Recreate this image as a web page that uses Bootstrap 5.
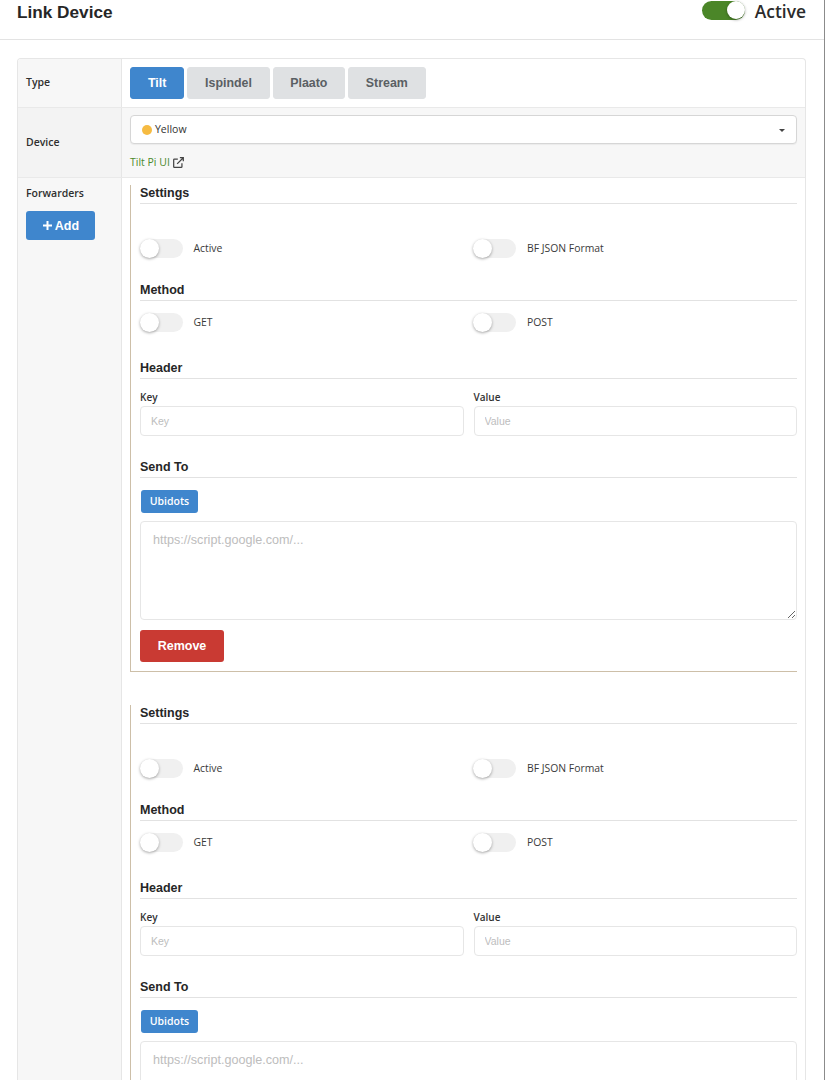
<!DOCTYPE html>
<html lang="en">
<head>
<meta charset="utf-8">
<title>Link Device</title>
<link href="https://cdn.jsdelivr.net/npm/bootstrap@5.3.0/dist/css/bootstrap.min.css" rel="stylesheet">
<style>
html,body{height:1080px;overflow:hidden}
body{font-family:"Open Sans","Liberation Sans",sans-serif;font-size:10.5px;color:#333;background:#fff;border-right:1px solid #8b8b8b}
.topbar{height:40px;padding:0 18px 0 17px;border-bottom:1px solid #e3e3e3}
.page-title{font-family:"Liberation Sans",sans-serif;font-weight:700;font-size:17.2px;color:#262626;margin:0 0 15px;line-height:24px}
.top-state{font-size:17.4px;font-weight:600;color:#2b2b2b;line-height:22px;margin-left:10px}
.switcher{display:block;width:43px;height:19px;border-radius:10px;background:#f0f0f0;position:relative;flex:none}
.switcher::after{content:"";position:absolute;left:0;top:0;width:19px;height:19px;border-radius:50%;background:#fff;box-shadow:0 1px 3px rgba(0,0,0,.35)}
.switcher.on{background:#4b8628}
.switcher.on::after{left:25px;width:18px;height:18px}
.top-wrap{margin-bottom:18px}
.panel{margin:18px 18px 0 17px;border:1px solid #e6e6e6;border-radius:4px 4px 0 0;border-bottom:0;overflow:hidden}
.line{display:flex}
.line+.line{border-top:1px solid #e9e9e9}
.side{width:104px;flex:none;background:#f7f7f7;border-right:1px solid #e6e6e6;padding:0 8px;font-weight:600;color:#2f2f2f;font-size:10.5px}
.main{flex:1;min-width:0;padding:0 8px}
.h49{height:48px}
.h70{height:69px}
.shade{background:#f7f7f7}
.side.darker{background:#f3f3f3}
.tabs{gap:3px}
.tab{font-family:"Liberation Sans",sans-serif;font-weight:700;font-size:12.4px;height:32px;border-radius:3px;border:1px solid #dfe1e3;background:#dfe1e3;color:#5a5f63;padding:0 16.7px;display:flex;align-items:center;justify-content:center}
.tab.act{background:#3f86cd;border-color:#3f86cd;color:#fff;padding:0 17px}
.picker{height:29px;background:#fff;border:1px solid #d6d6d6;border-radius:4px;padding:1px 11px 0;color:#333;font-size:10.5px;margin-top:7px;box-shadow:0 1px 1px rgba(0,0,0,.05)}
.dot{width:10px;height:10px;border-radius:50%;background:#f6bb42;display:inline-block;margin-right:3px}
.caret-mark{width:0;height:0;border-left:3px solid transparent;border-right:3px solid transparent;border-top:3px solid #444}
.extlink{color:#4b8a2b;font-size:10.5px;text-decoration:none;line-height:14px;margin-top:11px;display:flex;align-items:center;gap:3px}
.add-btn{background:#3f86cd;border:0;color:#fff;font-family:"Liberation Sans",sans-serif;font-weight:700;font-size:12.5px;width:69px;height:29px;border-radius:3px;margin-top:11px;display:flex;align-items:center;justify-content:center;gap:2px;padding:0}
.fwd-label{padding-top:8px;line-height:14px}
.fwd{border-left:1px solid #cdbfa8;padding-left:9px}
.fwd.first{border-bottom:1px solid #cdbfa8;margin-top:7px;padding-bottom:9px;margin-bottom:33px}
.sect{font-family:"Liberation Sans",sans-serif;font-weight:700;font-size:12.5px;color:#262626;line-height:16px;padding-bottom:2px;border-bottom:1px solid #e2e2e2;margin:0}
.pairs{display:grid;grid-template-columns:1fr 1fr;column-gap:10px}
.toggle-row{display:flex;align-items:center;gap:11px;height:19px}
.toggle-row .switcher{margin-left:-.5px}
.toggle-row span.txt{color:#3a3a3a;font-size:10.4px}
.fld-label{font-weight:600;font-size:10px;color:#333;line-height:12px;margin-bottom:3px}
.field{display:block;width:100%;height:30px;border:1px solid #e6e6e6;border-radius:4px;font-family:"Liberation Sans",sans-serif;font-size:10.5px;padding:0 10px;outline:0;background:#fff}
.field::placeholder,.big-field::placeholder{color:#bdbdbd;opacity:1}
.big-field{display:block;width:100%;height:99px;border:1px solid #e6e6e6;border-radius:4px;font-family:"Liberation Sans",sans-serif;font-size:12.6px;padding:9px 12px;outline:0;background:#fff;resize:vertical}
.mini-btn{display:block;background:#3f86cd;border:0;border-radius:3px;color:#fff;font-weight:600;font-size:10.5px;width:57px;height:23px;padding:0;margin-left:1px}
.rm-btn{display:block;background:#c93a33;border:0;border-radius:3px;color:#fff;font-family:"Liberation Sans",sans-serif;font-weight:700;font-size:12.5px;width:84px;height:32px;padding:1px 0 0;margin-top:10px}
.gap-a{margin-top:35px}.gap-b{margin-top:24px}.gap-c{margin-top:12px}.gap-d{margin-top:28px}.gap-e{margin-top:12px}.gap-f{margin-top:23px}.gap-g{margin-top:8px}.gap-h{margin-top:12px}
</style>
</head>
<body>
<header class="topbar d-flex justify-content-between align-items-center">
  <h1 class="page-title">Link Device</h1>
  <div class="d-flex align-items-center top-wrap"><span class="switcher on"></span><span class="top-state">Active</span></div>
</header>

<section class="panel">
  <div class="line">
    <div class="side h49 d-flex align-items-center">Type</div>
    <div class="main h49 d-flex align-items-center tabs">
      <div class="tab act">Tilt</div><div class="tab">Ispindel</div><div class="tab">Plaato</div><div class="tab">Stream</div>
    </div>
  </div>
  <div class="line">
    <div class="side darker h70 d-flex align-items-center">Device</div>
    <div class="main h70 shade">
      <div class="picker d-flex align-items-center"><span class="dot"></span>Yellow<span class="caret-mark ms-auto"></span></div>
      <a class="extlink" href="#">Tilt Pi UI
        <svg width="11" height="11" viewBox="0 0 16 16" fill="none" stroke="#444" stroke-width="1.8"><path d="M13 9v5a1 1 0 0 1-1 1H2a1 1 0 0 1-1-1V4a1 1 0 0 1 1-1h5"/><path d="M6 10 15 1M10 1h5v5"/></svg></a>
    </div>
  </div>
  <div class="line">
    <div class="side fwd-label">
      <div>Forwarders</div>
      <button class="add-btn" type="button"><svg width="11" height="11" viewBox="0 0 11 11"><path d="M5.5 1v9M1 5.5h9" stroke="#fff" stroke-width="2"/></svg>Add</button>
    </div>
    <div class="main">
      <div class="fwd first">
        <h6 class="sect">Settings</h6>
        <div class="pairs gap-a">
          <div class="toggle-row"><span class="switcher"></span><span class="txt">Active</span></div>
          <div class="toggle-row"><span class="switcher"></span><span class="txt">BF JSON Format</span></div>
        </div>
        <h6 class="sect gap-b">Method</h6>
        <div class="pairs gap-c">
          <div class="toggle-row"><span class="switcher"></span><span class="txt">GET</span></div>
          <div class="toggle-row"><span class="switcher"></span><span class="txt">POST</span></div>
        </div>
        <h6 class="sect gap-d">Header</h6>
        <div class="pairs gap-e">
          <div><div class="fld-label">Key</div><input class="field" placeholder="Key"></div>
          <div><div class="fld-label">Value</div><input class="field" placeholder="Value"></div>
        </div>
        <h6 class="sect gap-f">Send To</h6>
        <button class="mini-btn gap-h" type="button">Ubidots</button>
        <textarea class="big-field gap-g" placeholder="https://script.google.com/..."></textarea>
        <button class="rm-btn" type="button">Remove</button>
      </div>
      <div class="fwd">
        <h6 class="sect">Settings</h6>
        <div class="pairs gap-a">
          <div class="toggle-row"><span class="switcher"></span><span class="txt">Active</span></div>
          <div class="toggle-row"><span class="switcher"></span><span class="txt">BF JSON Format</span></div>
        </div>
        <h6 class="sect gap-b">Method</h6>
        <div class="pairs gap-c">
          <div class="toggle-row"><span class="switcher"></span><span class="txt">GET</span></div>
          <div class="toggle-row"><span class="switcher"></span><span class="txt">POST</span></div>
        </div>
        <h6 class="sect gap-d">Header</h6>
        <div class="pairs gap-e">
          <div><div class="fld-label">Key</div><input class="field" placeholder="Key"></div>
          <div><div class="fld-label">Value</div><input class="field" placeholder="Value"></div>
        </div>
        <h6 class="sect gap-f">Send To</h6>
        <button class="mini-btn gap-h" type="button">Ubidots</button>
        <textarea class="big-field gap-g" placeholder="https://script.google.com/..."></textarea>
      </div>
    </div>
  </div>
</section>
</body>
</html>
